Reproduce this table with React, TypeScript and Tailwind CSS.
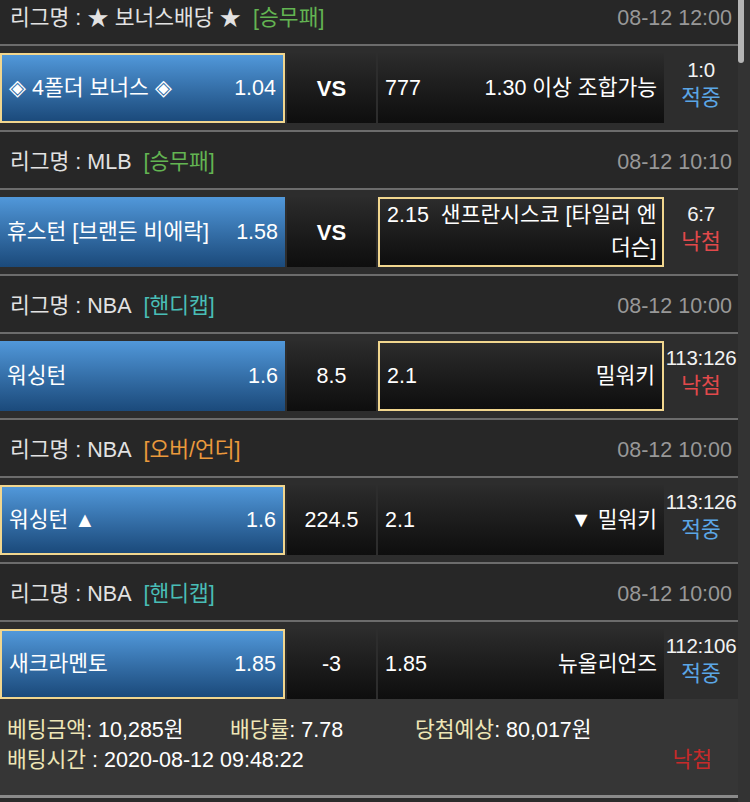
import React from "react";

type Match = {
  league: string;
  tag: string;
  tagColor: string;
  date: string;
  home: string;
  homeOdds: string;
  mid: string;
  midBold?: boolean;
  awayOdds: string;
  away: string[];
  sel: "home" | "away";
  score: string;
  result: "적중" | "낙첨";
};

const matches: Match[] = [
  {
    league: "리그명 : ★ 보너스배당 ★",
    tag: "[승무패]",
    tagColor: "text-[#63b452]",
    date: "08-12 12:00",
    home: "◈ 4폴더 보너스 ◈",
    homeOdds: "1.04",
    mid: "VS",
    midBold: true,
    awayOdds: "777",
    away: ["1.30 이상 조합가능"],
    sel: "home",
    score: "1:0",
    result: "적중",
  },
  {
    league: "리그명 : MLB",
    tag: "[승무패]",
    tagColor: "text-[#63b452]",
    date: "08-12 10:10",
    home: "휴스턴 [브랜든 비에락]",
    homeOdds: "1.58",
    mid: "VS",
    midBold: true,
    awayOdds: "2.15",
    away: ["샌프란시스코 [타일러 엔", "더슨]"],
    sel: "away",
    score: "6:7",
    result: "낙첨",
  },
  {
    league: "리그명 : NBA",
    tag: "[핸디캡]",
    tagColor: "text-[#49bdb6]",
    date: "08-12 10:00",
    home: "워싱턴",
    homeOdds: "1.6",
    mid: "8.5",
    awayOdds: "2.1",
    away: ["밀워키"],
    sel: "away",
    score: "113:126",
    result: "낙첨",
  },
  {
    league: "리그명 : NBA",
    tag: "[오버/언더]",
    tagColor: "text-[#eb9a3c]",
    date: "08-12 10:00",
    home: "워싱턴 ▲",
    homeOdds: "1.6",
    mid: "224.5",
    awayOdds: "2.1",
    away: ["▼ 밀워키"],
    sel: "home",
    score: "113:126",
    result: "적중",
  },
  {
    league: "리그명 : NBA",
    tag: "[핸디캡]",
    tagColor: "text-[#49bdb6]",
    date: "08-12 10:00",
    home: "새크라멘토",
    homeOdds: "1.85",
    mid: "-3",
    awayOdds: "1.85",
    away: ["뉴올리언즈"],
    sel: "home",
    score: "112:106",
    result: "적중",
  },
];

function Block({ m, last }: { m: Match; last: boolean }) {
  return (
    <div>
      <div className="h-[56px] pt-[4px] pl-[10px] pr-[6px] flex items-center justify-between bg-[#272727]">
        <div className="text-[#e2e2e2] whitespace-nowrap">
          {m.league}
          <span className={`ml-[12px] ${m.tagColor}`}>{m.tag}</span>
        </div>
        <div className="text-[#989898]">{m.date}</div>
      </div>
      <div className="h-[2px] bg-[#6c6c6c]" />
      <div
        className={
          last
            ? "h-[77px] pt-[7px] flex bg-[#2d2d2d]"
            : "h-[84px] py-[7px] flex bg-[#2d2d2d]"
        }
      >
        <div
          className={`w-[285px] h-[70px] shrink-0 flex items-center justify-between px-[7px] text-white bg-gradient-to-b from-[#5198da] to-[#1b4a7b] ${
            m.sel === "home" ? "border-2 border-[#f1d68e]" : ""
          }`}
        >
          <span className="whitespace-nowrap">{m.home}</span>
          <span>{m.homeOdds}</span>
        </div>
        <div
          className={`ml-[2px] w-[89px] h-[70px] shrink-0 flex items-center justify-center text-white bg-gradient-to-b from-[#2c2c2c] to-[#0e0e0e] ${
            m.midBold ? "font-bold text-[22px]" : ""
          }`}
        >
          {m.mid}
        </div>
        <div
          className={`ml-[2px] w-[286px] h-[70px] shrink-0 flex items-center px-[7px] text-white leading-[33px] bg-gradient-to-b from-[#2c2c2c] to-[#0e0e0e] ${
            m.sel === "away" ? "border-2 border-[#f1d68e]" : ""
          }`}
        >
          <div className="w-full flex items-start justify-between gap-[12px]">
            <span className="shrink-0">{m.awayOdds}</span>
            <div className="flex flex-col items-end text-right">
              {m.away.map((line, i) => (
                <span key={i} className="whitespace-nowrap">
                  {line}
                </span>
              ))}
            </div>
          </div>
        </div>
        <div className="w-[74px] h-[70px] shrink-0 flex flex-col items-center justify-center pb-[8px] leading-[29px]">
          <span className="text-[#f2f2f2] text-[20.5px] tracking-[-0.3px] whitespace-nowrap">
            {m.score}
          </span>
          <span
            className={
              m.result === "적중" ? "text-[#5ba6e6]" : "text-[#e2494b]"
            }
          >
            {m.result}
          </span>
        </div>
      </div>
      {!last && <div className="h-[2px] bg-[#6c6c6c]" />}
    </div>
  );
}

export default function App() {
  return (
    <div className="w-[750px] h-[802px] overflow-hidden flex bg-[#2b2b2b] text-[21.5px] font-[Liberation_Sans,Noto_Sans_CJK_KR,sans-serif]">
      <div className="w-[738px] shrink-0 flex flex-col">
        <div className="-mt-[12px]">
          {matches.map((m, i) => (
            <Block key={i} m={m} last={i === matches.length - 1} />
          ))}
        </div>
        <div className="h-[96px] bg-[#363636] pt-[16px] pl-[7px] pr-[26px] leading-[30px]">
          <div className="flex">
            <div className="w-[223px] whitespace-nowrap">
              <span className="text-[#eee6b6]">베팅금액</span>
              <span className="text-white">: 10,285원</span>
            </div>
            <div className="w-[185px] whitespace-nowrap">
              <span className="text-[#eee6b6]">배당률</span>
              <span className="text-white">: 7.78</span>
            </div>
            <div className="whitespace-nowrap">
              <span className="text-[#eee6b6]">당첨예상</span>
              <span className="text-white">: 80,017원</span>
            </div>
          </div>
          <div className="flex justify-between">
            <div className="whitespace-nowrap">
              <span className="text-[#eee6b6]">배팅시간</span>
              <span className="text-white"> : 2020-08-12 09:48:22</span>
            </div>
            <span className="text-[#c72a2a]">낙첨</span>
          </div>
        </div>
        <div className="h-[3px] bg-[#8a8a8a]" />
        <div className="flex-1 bg-[#2b2b2b]" />
      </div>
      <div className="relative w-[12px] shrink-0 bg-[#333333]">
        <div className="absolute -top-[10px] left-[0px] w-[6px] h-[73px] rounded-full bg-[#b5b5b5]" />
      </div>
    </div>
  );
}
